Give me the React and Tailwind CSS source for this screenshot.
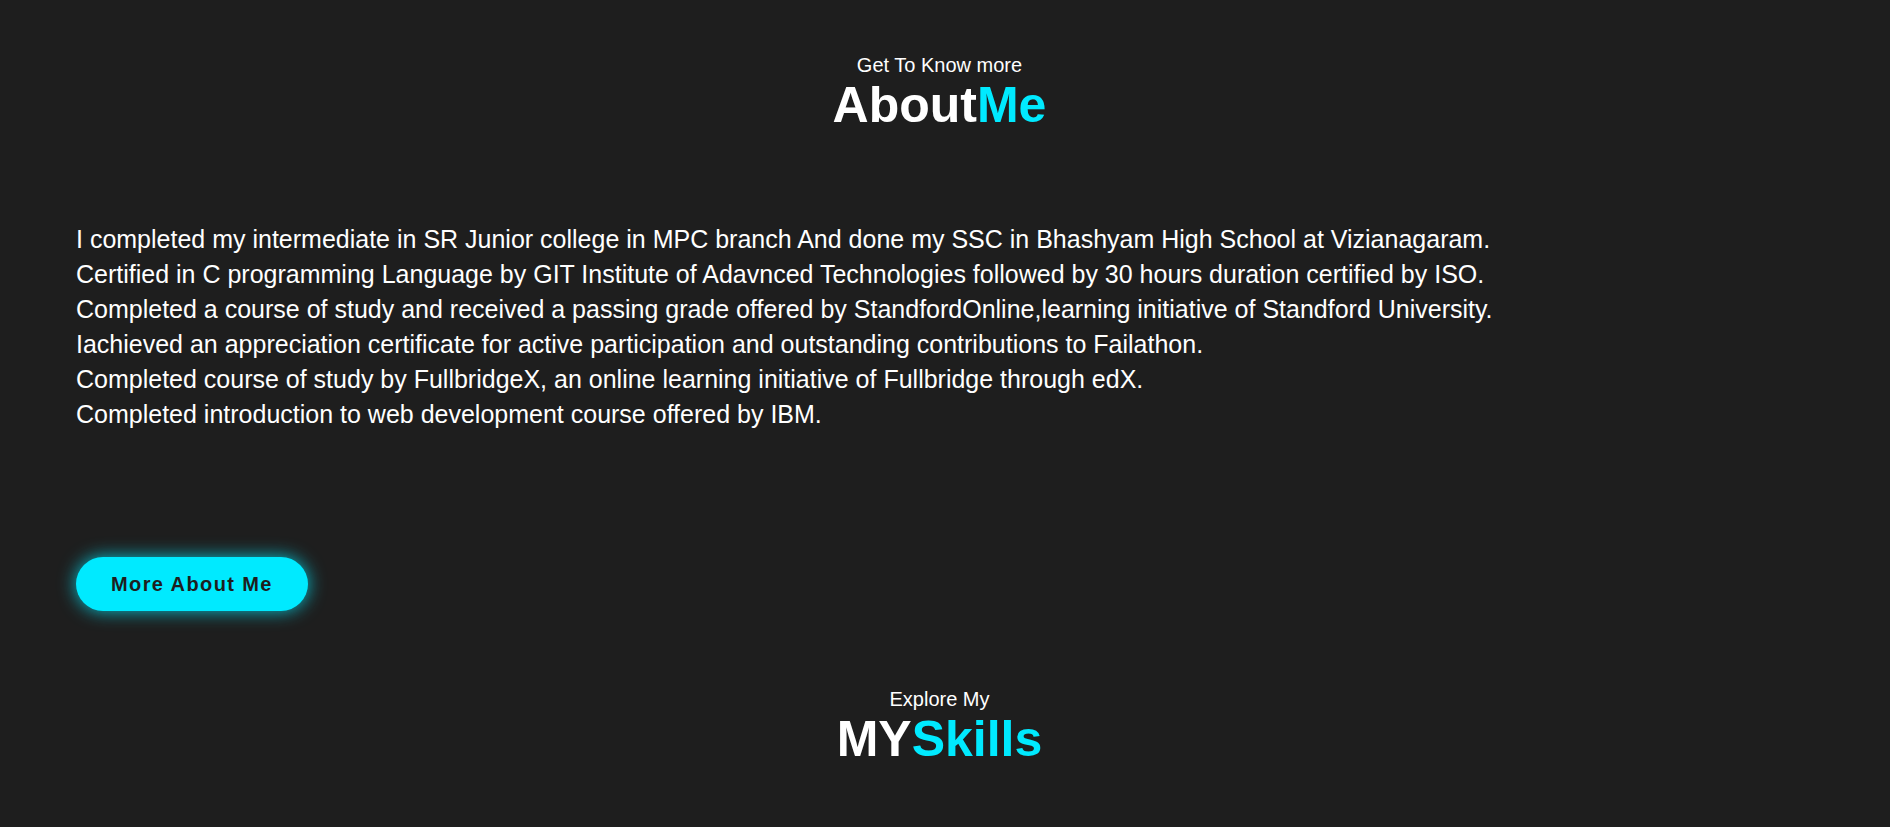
export default function App() {
  const lines = [
    "I completed my intermediate in SR Junior college in MPC branch And done my SSC in Bhashyam High School at Vizianagaram.",
    "Certified in C programming Language by GIT Institute of Adavnced Technologies followed by 30 hours duration certified by ISO.",
    "Completed a course of study and received a passing grade offered by StandfordOnline,learning initiative of Standford University.",
    "Iachieved an appreciation certificate for active participation and outstanding contributions to Failathon.",
    "Completed course of study by FullbridgeX, an online learning initiative of Fullbridge through edX.",
    "Completed introduction to web development course offered by IBM.",
  ];

  return (
    <div
      className="min-h-[827px] w-full bg-[#1e1e1e] text-white"
      style={{ fontFamily: '"Liberation Sans", Arial, sans-serif' }}
    >
      {/* about header */}
      <div className="pt-[53px] pr-[11px] text-center">
        <p className="text-[20px] leading-[24px]">Get To Know more</p>
        <h1 className="text-[50px] font-bold leading-[56px]">
          About<span className="text-[#00eaff]">Me</span>
        </h1>
      </div>

      <div className="px-[76px] pt-[89px]">
        <div className="text-[25px] leading-[35px]">
          {lines.map((l, i) => (
            <p key={i}>{l}</p>
          ))}
        </div>

        <div className="pt-[125px]">
          <button className="h-[54px] rounded-full bg-[#00eaff] px-[35px] text-[20px] font-bold tracking-[1.4px] text-[#1e1e1e] shadow-[0_0_18px_#00eaffcc]">
            More About Me
          </button>
        </div>
      </div>

      {/* skills header */}
      <div className="pt-[76px] pr-[11px] text-center">
        <p className="text-[20px] leading-[24px]">Explore My</p>
        <h2 className="text-[50px] font-bold leading-[56px]">
          MY<span className="text-[#00eaff]">Skills</span>
        </h2>
      </div>
    </div>
  );
}
